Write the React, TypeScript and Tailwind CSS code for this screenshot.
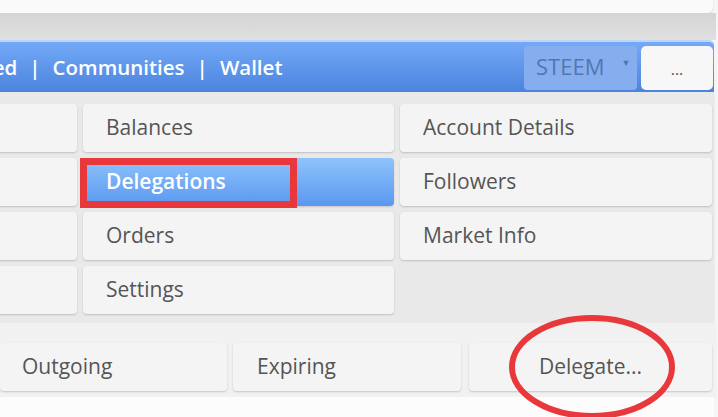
import React from 'react';

const MENU: (string | null)[][] = [
  ['', 'Balances', 'Account Details'],
  ['', 'Delegations', 'Followers'],
  ['', 'Orders', 'Market Info'],
  ['', 'Settings', null],
];

function MenuCard({ label, active }: { label: string; active?: boolean }) {
  if (active) {
    return (
      <div className="h-[48px] rounded-[4px] bg-gradient-to-b from-[#8ec3fb] to-[#5b97f0] shadow-[0_1px_2px_rgba(0,0,0,0.15)] flex items-center pl-[23px] text-white font-semibold text-[21px]">
        {label}
      </div>
    );
  }
  return (
    <div className="h-[48px] rounded-[4px] bg-[#f4f4f4] shadow-[0_1px_2px_rgba(0,0,0,0.18)] flex items-center pl-[23px] text-[#555] text-[21px]">
      {label}
    </div>
  );
}

export default function App() {
  return (
    <div className="relative w-[718px] h-[417px] overflow-hidden bg-[#f5f5f5] font-['Open_Sans',sans-serif]">
      {/* white card above */}
      <div className="h-[13px] w-[713px] bg-[#fafafa] rounded-br-[6px] shadow-[0_1px_2px_rgba(0,0,0,0.12)]" />
      <div className="h-[27px] w-[716px] bg-gradient-to-b from-[#d4d4d4] to-[#e0e0e0]" />

      {/* blue nav bar */}
      <div className="h-[52px] w-[714px] rounded-tr-[5px] border-t-2 border-[#bcd5fb] bg-gradient-to-b from-[#74a9f6] to-[#4b84df] flex items-center overflow-hidden">
        <div className="-ml-[30px] flex items-center gap-[12px] text-white font-semibold text-[20.5px] whitespace-nowrap">
          <span>Feed</span>
          <span>|</span>
          <span>Communities</span>
          <span>|</span>
          <span>Wallet</span>
        </div>
        <div className="ml-auto mr-[1px] flex items-stretch gap-[4px] h-[44px] mt-[2px]">
          <div className="w-[113px] rounded-[4px] bg-[#86aeee] flex items-center pl-[12px] pb-[4px] gap-[17px] text-[#5277b0] text-[22px]">
            <span>STEEM</span>
            <span className="text-[9px] -mt-[6px]">▼</span>
          </div>
          <div className="w-[72px] rounded-[5px] bg-[#f7f7f7] flex items-center justify-center text-[#555] text-[16px] pt-[2px]">
            ...
          </div>
        </div>
      </div>

      {/* wallet menu panel */}
      <div className="w-[714px] bg-[#e9e9e9] pt-[12px] pb-[9px] shadow-[0_1px_2px_rgba(0,0,0,0.1)]">
        <div className="-ml-[10px] grid grid-cols-[87px_311px_312px] gap-x-[6px] gap-y-[6px]">
          {MENU.map((row, r) =>
            row.map((cell, c) =>
              cell === null ? (
                <div key={`${r}-${c}`} />
              ) : (
                <MenuCard key={`${r}-${c}`} label={cell} active={cell === 'Delegations'} />
              )
            )
          )}
        </div>
      </div>

      {/* delegation actions */}
      <div className="w-[716px] bg-[#f1f1f1] pt-[20px] pb-[6px]">
        <div className="grid grid-cols-[227px_228px_245px] gap-x-[6px] [&>*:last-child]:ml-[2px]">
          <div className="h-[48px] rounded-[4px] bg-[#f4f4f4] shadow-[0_1px_2px_rgba(0,0,0,0.18)] flex items-center pl-[22px] text-[#555] text-[21px]">
            Outgoing
          </div>
          <div className="h-[48px] rounded-[4px] bg-[#f4f4f4] shadow-[0_1px_2px_rgba(0,0,0,0.18)] flex items-center pl-[24px] text-[#555] text-[21px]">
            Expiring
          </div>
          <div className="h-[48px] rounded-[4px] bg-[#f4f4f4] shadow-[0_1px_2px_rgba(0,0,0,0.18)] flex items-center justify-center text-[#555] text-[21px]">
            Delegate...
          </div>
        </div>
      </div>
      <div className="w-[714px] h-[30px] bg-[#fcfcfc]" />

      {/* annotations */}
      <div className="absolute left-[80px] top-[158px] w-[217px] h-[50px] border-[7px] border-[#e8383b]" />
      <svg className="absolute left-0 top-0" width="718" height="417" viewBox="0 0 718 417">
        <ellipse cx="592" cy="367" rx="80" ry="49" fill="none" stroke="#e8383b" strokeWidth="6" />
      </svg>
    </div>
  );
}
